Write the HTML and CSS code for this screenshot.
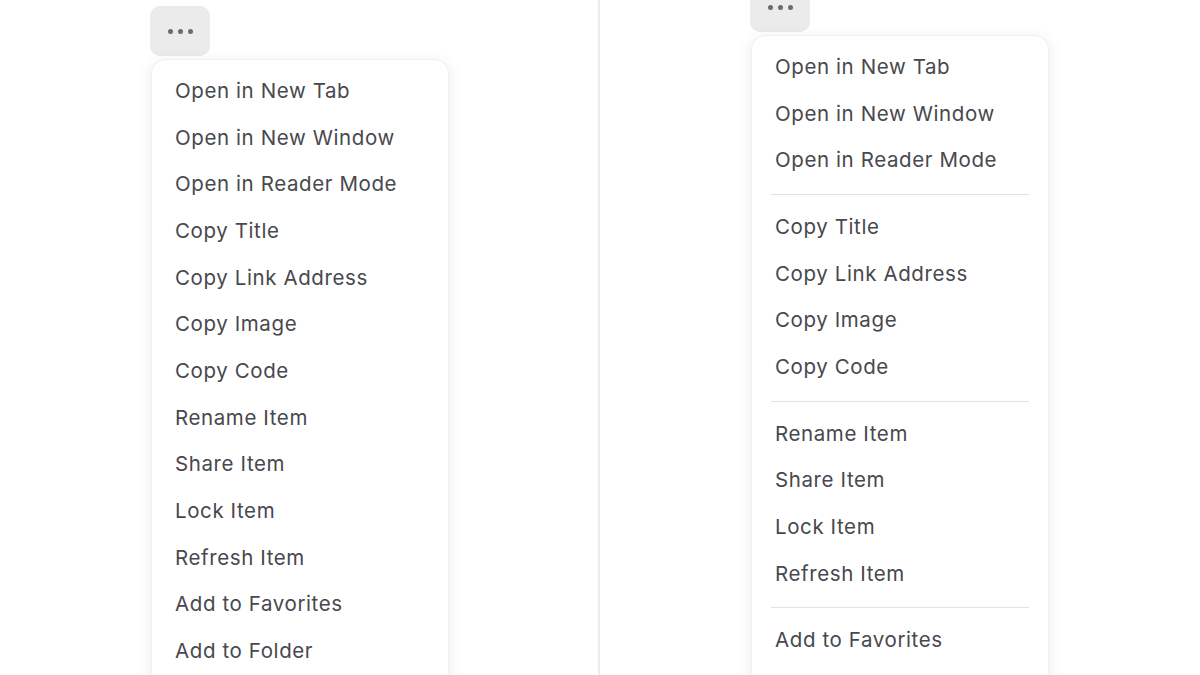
FILE: index.html
```html
<!DOCTYPE html>
<html lang="en">
<head>
    <meta charset="UTF-8">
    <meta name="viewport" content="width=device-width, initial-scale=1.0">
    <title>Menus</title>
    <link rel="stylesheet" href="styles.css">
</head>
<body>
    <div class="pane pane-left">
        <div class="more-btn"><span></span><span></span><span></span></div>
        <ul class="menu">
            <li>Open in New Tab</li>
            <li>Open in New Window</li>
            <li>Open in Reader Mode</li>
            <li>Copy Title</li>
            <li>Copy Link Address</li>
            <li>Copy Image</li>
            <li>Copy Code</li>
            <li>Rename Item</li>
            <li>Share Item</li>
            <li>Lock Item</li>
            <li>Refresh Item</li>
            <li>Add to Favorites</li>
            <li>Add to Folder</li>
        </ul>
    </div>
    <div class="pane pane-right">
        <div class="more-btn"><span></span><span></span><span></span></div>
        <ul class="menu">
            <li>Open in New Tab</li>
            <li>Open in New Window</li>
            <li>Open in Reader Mode</li>
            <li class="sep"></li>
            <li>Copy Title</li>
            <li>Copy Link Address</li>
            <li>Copy Image</li>
            <li>Copy Code</li>
            <li class="sep"></li>
            <li>Rename Item</li>
            <li>Share Item</li>
            <li>Lock Item</li>
            <li>Refresh Item</li>
            <li class="sep"></li>
            <li>Add to Favorites</li>
        </ul>
    </div>
</body>
</html>
```

FILE: styles.css
```css
body, html {
    margin: 0;
    height: 100%;
    overflow: hidden;
    background: #fff;
}

body {
    display: flex;
    font-family: Inter, "Noto Sans", sans-serif;
}

.pane {
    width: 600px;
    padding-left: 150px;
    box-sizing: border-box;
}

.pane-left {
    padding-top: 6px;
    border-right: 2px solid #ececec;
}

.pane-right {
    margin-top: -18px;
}

.more-btn {
    width: 60px;
    height: 50px;
    border-radius: 10px;
    background: #ebebeb;
    display: flex;
    justify-content: center;
    align-items: center;
    gap: 5px;
}

.more-btn span {
    width: 5px;
    height: 5px;
    border-radius: 50%;
    background: #6b6b6b;
}

.menu {
    list-style: none;
    margin: 3px 0 0 1px;
    padding: 8px 0;
    width: 298px;
    min-height: 700px;
    background: #fff;
    border-radius: 14px;
    border: 1px solid #f0f0f0;
    box-sizing: border-box;
    box-shadow: 0 4px 18px rgba(0, 0, 0, 0.08);
}

.menu li {
    height: 46.67px;
    line-height: 46.67px;
    padding-left: 23px;
    font-size: 20.5px;
    color: #48484d;
    letter-spacing: 0.6px;
}

.menu li.sep {
    height: 1px;
    margin: 10px 19px 9px 19px;
    padding: 0;
    background: #e2e2e2;
}
```
